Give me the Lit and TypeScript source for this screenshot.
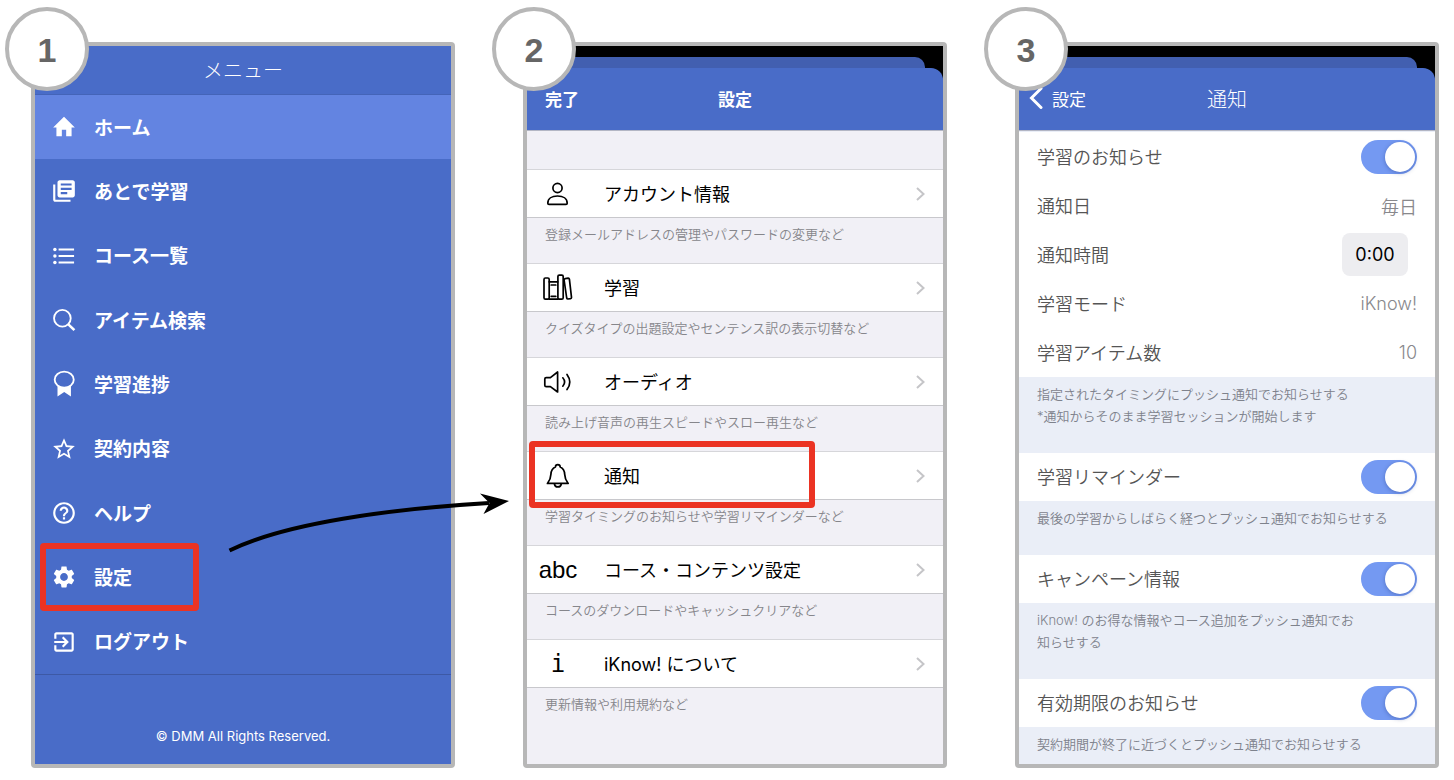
import { LitElement, html, svg, css, nothing, TemplateResult } from "lit";
import { customElement } from "lit/decorators.js";
import { classMap } from "lit/directives/class-map.js";

interface MenuItem {
  label: string;
  icon: TemplateResult;
  active?: boolean;
  marked?: boolean;
}

interface SettingItem {
  label: string;
  note: string;
  icon: TemplateResult;
  marked?: boolean;
}

const glyph = (shape: TemplateResult) =>
  html`<svg class="menu-icon" viewBox="0 0 24 24" aria-hidden="true">${shape}</svg>`;

const lineIcon = (shape: TemplateResult) =>
  html`<svg class="line-icon" viewBox="0 0 40 32" aria-hidden="true">${shape}</svg>`;

const MENU: MenuItem[] = [
  {
    label: "ホーム",
    active: true,
    icon: glyph(svg`<path d="M10 20.500v-6h4v6h5v-8h3L12 2.500 2 12.500h3v8z"/>`),
  },
  {
    label: "あとで学習",
    icon: glyph(svg`<path d="M4 6H2v14c0 1.1.9 2 2 2h14v-2H4V6zm16-4H8c-1.1 0-2 .9-2 2v12c0 1.1.9 2 2 2h12c1.1 0 2-.9 2-2V4c0-1.1-.9-2-2-2zm-1 9H9V9h10v2zm-4 4H9v-2h6v2zm4-8H9V5h10v2z"/>`),
  },
  {
    label: "コース一覧",
    icon: glyph(svg`<g><circle cx="3.6" cy="6" r="1.6"/><circle cx="3.6" cy="12" r="1.6"/><circle cx="3.6" cy="18" r="1.6"/><path d="M7 5.1h14.3v1.8H7zM7 11.1h14.3v1.8H7zM7 17.1h14.3v1.8H7z"/></g>`),
  },
  {
    label: "アイテム検索",
    icon: glyph(svg`<g fill="none" stroke="currentColor"><circle cx="10.5" cy="10.4" r="7.7" stroke-width="1.7"/><path d="M16 16l5.6 5.4" stroke-width="2.4"/></g>`),
  },
  {
    label: "学習進捗",
    icon: glyph(svg`<g><ellipse cx="12.2" cy="8" rx="8.8" ry="7.4" fill="none" stroke="currentColor" stroke-width="1.7"/><path d="M6 13q6.200 4.400 12.400 0v10.6L12.2 19.4 6 23.6z"/></g>`),
  },
  {
    label: "契約内容",
    icon: glyph(svg`<path d="M22 9.24l-7.19-.62L12 2 9.19 8.63 2 9.24l5.46 4.73L5.82 21 12 17.27 18.18 21l-1.63-7.03L22 9.24zM12 15.4l-3.76 2.27 1-4.28-3.32-2.88 4.38-.38L12 6.1l1.71 4.04 4.38.38-3.32 2.88 1 4.28L12 15.4z"/>`),
  },
  {
    label: "ヘルプ",
    icon: glyph(svg`<path d="M11 18h2v-2h-2v2zm1-16C6.48 2 2 6.48 2 12s4.48 10 10 10 10-4.48 10-10S17.52 2 12 2zm0 18c-4.41 0-8-3.59-8-8s3.59-8 8-8 8 3.59 8 8-3.59 8-8 8zm0-14c-2.21 0-4 1.79-4 4h2c0-1.1.9-2 2-2s2 .9 2 2c0 2-3 1.75-3 5h2c0-2.25 3-2.5 3-5 0-2.21-1.79-4-4-4z"/>`),
  },
  {
    label: "設定",
    marked: true,
    icon: glyph(svg`<path d="M19.14 12.94c.04-.3.06-.61.06-.94 0-.32-.02-.64-.07-.94l2.03-1.58c.18-.14.23-.41.12-.61l-1.92-3.32c-.12-.22-.37-.29-.59-.22l-2.39.96c-.5-.38-1.03-.7-1.62-.94l-.36-2.54c-.04-.24-.24-.41-.48-.41h-3.84c-.24 0-.43.17-.47.41l-.36 2.54c-.59.24-1.13.57-1.62.94l-2.39-.96c-.22-.08-.47 0-.59.22L2.74 8.87c-.12.21-.08.47.12.61l2.03 1.58c-.05.3-.09.63-.09.94s.02.64.07.94l-2.03 1.58c-.18.14-.23.41-.12.61l1.92 3.32c.12.22.37.29.59.22l2.39-.96c.5.38 1.03.7 1.62.94l.36 2.54c.05.24.24.41.48.41h3.84c.24 0 .44-.17.47-.41l.36-2.54c.59-.24 1.13-.56 1.62-.94l2.39.96c.22.08.47 0 .59-.22l1.92-3.32c.12-.22.07-.47-.12-.61l-2.01-1.58zM12 15.6c-1.98 0-3.6-1.62-3.6-3.6s1.62-3.6 3.6-3.6 3.6 1.62 3.6 3.6-1.62 3.6-3.6 3.6z"/>`),
  },
  {
    label: "ログアウト",
    icon: glyph(svg`<path d="M10.09 15.59L11.5 17l5-5-5-5-1.41 1.41L12.67 11H3v2h9.67l-2.58 2.59zM19 3H5c-1.11 0-2 .9-2 2v4h2V5h14v14H5v-4H3v4c0 1.1.89 2 2 2h14c1.1 0 2-.9 2-2V5c0-1.1-.9-2-2-2z"/>`),
  },
];

const SETTINGS: SettingItem[] = [
  {
    label: "アカウント情報",
    note: "登録メールアドレスの管理やパスワードの変更など",
    icon: lineIcon(svg`<circle cx="19.5" cy="10" r="4.6"/><path d="M9.8 25.2c0-4.4 4-7.2 9.7-7.2s9.7 2.8 9.7 7.2q0 1.2-1.2 1.2H11q-1.2 0-1.2-1.2z"/>`),
  },
  {
    label: "学習",
    note: "クイズタイプの出題設定やセンテンス訳の表示切替など",
    icon: lineIcon(svg`<rect x="6" y="6" width="5.2" height="21.2" rx="1.4"/><path d="M11.2 9.8h8.5M11.2 27.2h8.7M13.2 13h4.6M13.2 24.3h4.6"/><rect x="19.9" y="3.2" width="5.3" height="24" rx="1.4"/><path d="M27.2 6.6l3-.4q1 0 1.2 1l2.1 18.2q0 1-1 1.2l-2.6.4q-1 0-1.2-1L26.1 8q-.1-1.200 1.100-1.400z"/>`),
  },
  {
    label: "オーディオ",
    note: "読み上げ音声の再生スピードやスロー再生など",
    icon: lineIcon(svg`<path d="M12.400 11.600L19.600 6V26L12.400 20.600H8.200q-1.400 0-1.400-1.400V13q0-1.400 1.400-1.400z"/><path d="M24.800 11.800q3.600 4.200 0 8.400M29 8.400q5.600 7.600 0 15.200"/>`),
  },
  {
    label: "通知",
    note: "学習タイミングのお知らせや学習リマインダーなど",
    marked: true,
    icon: lineIcon(svg`<path d="M9.400 23.400c1.800-2.300 3.300-3.900 3.500-9 .2-3.800 2-6.400 4.500-7.400.1-3.200 4.700-3.200 4.800 0 2.500 1 4.300 3.600 4.500 7.400.2 5.100 1.700 6.700 3.500 9z"/><path d="M16.400 23.800a3.500 3.800 0 0 0 6.900 0"/>`),
  },
  {
    label: "コース・コンテンツ設定",
    note: "コースのダウンロードやキャッシュクリアなど",
    icon: html`<span class="text-icon">abc</span>`,
  },
  {
    label: "iKnow! について",
    note: "更新情報や利用規約など",
    icon: html`<span class="text-icon mono">i</span>`,
  },
];

@customElement("app-root")
export class AppRoot extends LitElement {
  static styles = css`
    :host {
      display: block;
      box-sizing: border-box;
      min-height: 100vh;
      padding: 42px 15px 12px 31px;
      background: #fff;
      font-family: Inter, "Noto Sans CJK JP", sans-serif;
      --blue: #496cc8;
      --frame: #b7b7b7;
      --mark: #eb3323;
    }
    *, *::before, *::after { box-sizing: border-box; }
    a { color: inherit; text-decoration: none; }
    ul, p, h2 { margin: 0; padding: 0; list-style: none; font-weight: inherit; }
    button { font: inherit; color: inherit; border: 0; padding: 0; background: none; }

    .steps {
      display: grid;
      grid-template-columns: repeat(3, minmax(0, 1fr));
      gap: 68px;
    }
    .step { position: relative; display: flex; }
    .frame {
      flex: 1;
      min-width: 0;
      display: flex;
      flex-direction: column;
      border: 4px solid var(--frame);
      border-radius: 4px;
      overflow: hidden;
    }
    .badge {
      position: absolute;
      left: -31px;
      top: -35px;
      width: 84px;
      height: 84px;
      display: grid;
      place-items: center;
      padding-top: 2px;
      border: 4px solid var(--frame);
      border-radius: 50%;
      background: #fff;
      color: #666;
      font: bold 34px/1 "Liberation Sans", sans-serif;
    }
    .step.first .badge { left: -26px; }
    .arrow {
      position: absolute;
      right: calc(100% + 14px);
      top: 446px;
      width: 284px;
      height: 70px;
      pointer-events: none;
    }
    .mark {
      position: absolute;
      border: 6px solid var(--mark);
      border-radius: 4px;
      pointer-events: none;
    }

    /* step 1 */
    .menu { background: var(--blue); color: #fff; }
    .menu-title {
      height: 49px;
      display: grid;
      place-items: center;
      padding-bottom: 2px;
      border-bottom: 1px solid #4464b8;
      font-size: 20px;
      font-weight: 300;
    }
    .menu-nav { flex: 1; display: flex; }
    .menu-list { flex: 1; display: flex; flex-direction: column; }
    .menu-item { position: relative; flex: 1; min-height: 64px; display: flex; }
    .menu-item.active { background: #6384e1; }
    .menu-link {
      flex: 1;
      display: flex;
      align-items: center;
      gap: 17px;
      padding: 0 16px;
      font-size: 19px;
      font-weight: 700;
    }
    .menu-label, .setting-label, .row-label { padding-bottom: 2px; }
    .menu-icon { width: 26px; height: 26px; fill: currentColor; overflow: visible; }
    .menu-item .mark { left: 5px; top: -2px; bottom: -1px; width: 159px; }
    .menu-foot {
      height: 90px;
      padding-top: 52px;
      border-top: 1px solid #3d59a5;
      text-align: center;
      font-size: 13px;
      line-height: 18px;
    }

    /* shared sheet header */
    .sheet-top { position: relative; padding-top: 11px; background: #000; }
    .back-sheet {
      height: 11px;
      margin: 0 18px;
      border-radius: 10px 10px 0 0;
      background: #425fb0;
    }
    .bar {
      height: 63px;
      display: grid;
      grid-template-columns: 1fr auto 1fr;
      align-items: center;
      padding: 0 18px 2px;
      border-bottom: 1px solid #b3b6c4;
      border-radius: 12px 12px 0 0;
      background: var(--blue);
      color: #fff;
      font-size: 17px;
    }
    .bar.bold { font-weight: 700; }
    .bar-action { justify-self: start; }
    .bar-back { justify-self: start; display: flex; align-items: center; gap: 9px; margin-left: -8px; }
    .bar-back svg { width: 14px; height: 22px; }
    .bar-title { font-size: inherit; }
    .bar-title.large { font-size: 20px; font-weight: 300; }

    /* step 2 */
    .settings { background: #f1f0f6; }
    .settings-list { padding-top: 38px; }
    .setting { position: relative; }
    .setting-link {
      height: 49px;
      display: flex;
      align-items: center;
      gap: 26px;
      padding: 0 18px 0 11px;
      border-top: 1px solid #d6d6da;
      border-bottom: 1px solid #c8c8cc;
      background: #fff;
      color: #000;
      font-size: 18px;
    }
    .setting-label { flex: 1; }
    .line-icon {
      width: 40px;
      height: 32px;
      fill: none;
      stroke: currentColor;
      stroke-width: 1.7;
      stroke-linecap: round;
      stroke-linejoin: round;
    }
    .text-icon { width: 40px; text-align: center; font-family: "Liberation Sans", sans-serif; font-size: 24px; line-height: 28px; }
    .text-icon.mono { font-family: "DejaVu Sans Mono", monospace; }
    .chevron { width: 9px; height: 14px; fill: none; stroke: #c5c5c8; stroke-width: 2; }
    .note {
      padding: 6px 18px 0;
      font-size: 13px;
      line-height: 22px;
      font-weight: 350;
      color: #86868b;
    }
    .setting .note { height: 45px; padding-top: 5px; }
    .setting .mark { left: 2px; top: -10px; width: 286px; height: 67px; }

    /* step 3 */
    .notice { background: #eaeef7; color: #555; }
    .rows { background: #fff; margin-top: 1px; }
    .row {
      height: 49px;
      display: flex;
      align-items: center;
      justify-content: space-between;
      padding: 0 18px;
      background: #fff;
      font-size: 18px;
      font-weight: 350;
    }
    .row.single { height: 48px; }
    .notice .note { padding-bottom: 26px; padding-right: 70px; color: #7e828c; }
    .notice .note.wide { padding-right: 18px; }
    .notice .note.last { padding-right: 18px; padding-bottom: 9px; }
    .value { color: #88888c; }
    .time {
      width: 66px;
      height: 43px;
      margin-right: 9px;
      border-radius: 8px;
      background: #ededf0;
      color: #000;
      font-weight: 400;
    }
    .switch {
      appearance: none;
      width: 56px;
      height: 34px;
      margin: 0;
      padding: 2px;
      display: flex;
      border-radius: 17px;
      background: #d8dae0;
    }
    .switch:checked { justify-content: flex-end; background: #7499f2; }
    .switch::before {
      content: "";
      width: 30px;
      height: 30px;
      border-radius: 50%;
      background: #fff;
      box-shadow: 0 1px 4px rgba(20, 40, 110, 0.35);
    }
  `;

  private renderMenu() {
    return html`
      <div class="frame menu">
        <h2 class="menu-title">メニュー</h2>
        <nav class="menu-nav" aria-label="メニュー">
          <ul class="menu-list">
            ${MENU.map(
              (item) => html`
                <li class=${classMap({ "menu-item": true, active: !!item.active })}>
                  <a class="menu-link" href="#">${item.icon}<span class="menu-label">${item.label}</span></a>
                  ${item.marked ? html`<span class="mark"></span>` : nothing}
                </li>
              `
            )}
          </ul>
        </nav>
        <p class="menu-foot">© DMM All Rights Reserved.</p>
      </div>
    `;
  }

  private renderSettings() {
    return html`
      <div class="frame settings">
        <div class="sheet-top">
          <div class="back-sheet"></div>
          <div class="bar bold">
            <button class="bar-action" type="button">完了</button>
            <h2 class="bar-title">設定</h2>
          </div>
        </div>
        <ul class="settings-list">
          ${SETTINGS.map(
            (item) => html`
              <li class="setting">
                <a class="setting-link" href="#">
                  ${item.icon}
                  <span class="setting-label">${item.label}</span>
                  <svg class="chevron" viewBox="0 0 9 14" aria-hidden="true"><path d="M1 1l6.500 6L1 13" /></svg>
                </a>
                <p class="note">${item.note}</p>
                ${item.marked ? html`<span class="mark"></span>` : nothing}
              </li>
            `
          )}
        </ul>
      </div>
    `;
  }

  private renderSwitch(id: string, label: string, single = true) {
    return html`
      <div class=${classMap({ row: true, single })}>
        <label class="row-label" for=${id}>${label}</label>
        <input class="switch" id=${id} type="checkbox" role="switch" checked />
      </div>
    `;
  }

  private renderNotice() {
    return html`
      <div class="frame notice">
        <div class="sheet-top">
          <div class="back-sheet"></div>
          <div class="bar">
            <button class="bar-back" type="button">
              <svg viewBox="0 0 14 22" aria-hidden="true">
                <path d="M12 1.500L2.500 11L12 20.500" fill="none" stroke="#fff" stroke-width="3" stroke-linecap="round" />
              </svg>
              設定
            </button>
            <h2 class="bar-title large">通知</h2>
          </div>
        </div>
        <div class="rows">
          ${this.renderSwitch("study", "学習のお知らせ", false)}
          <div class="row"><span class="row-label">通知日</span><span class="value">毎日</span></div>
          <div class="row">
            <span class="row-label" id="time-label">通知時間</span>
            <button class="time" type="button" aria-describedby="time-label">0:00</button>
          </div>
          <div class="row"><span class="row-label">学習モード</span><span class="value">iKnow!</span></div>
          <div class="row"><span class="row-label">学習アイテム数</span><span class="value">10</span></div>
        </div>
        <p class="note">
          指定されたタイミングにプッシュ通知でお知らせする<br />*通知からそのまま学習セッションが開始します
        </p>
        ${this.renderSwitch("reminder", "学習リマインダー")}
        <p class="note wide">最後の学習からしばらく経つとプッシュ通知でお知らせする</p>
        ${this.renderSwitch("campaign", "キャンペーン情報")}
        <p class="note">iKnow! のお得な情報やコース追加をプッシュ通知でお知らせする</p>
        ${this.renderSwitch("expiry", "有効期限のお知らせ")}
        <p class="note last">契約期間が終了に近づくとプッシュ通知でお知らせする</p>
      </div>
    `;
  }

  render() {
    return html`
      <main class="steps">
        <section class="step first">
          ${this.renderMenu()}
          <span class="badge">1</span>
        </section>
        <section class="step">
          ${this.renderSettings()}
          <span class="badge">2</span>
          <svg class="arrow" viewBox="0 0 284 70" aria-hidden="true">
            <path d="M4.500 62.500C60 35 165 21 264 15" fill="none" stroke="#000" stroke-width="4" />
            <path d="M284 13L255 5.500L264.500 15L258.500 26z" />
          </svg>
        </section>
        <section class="step">
          ${this.renderNotice()}
          <span class="badge">3</span>
        </section>
      </main>
    `;
  }
}
